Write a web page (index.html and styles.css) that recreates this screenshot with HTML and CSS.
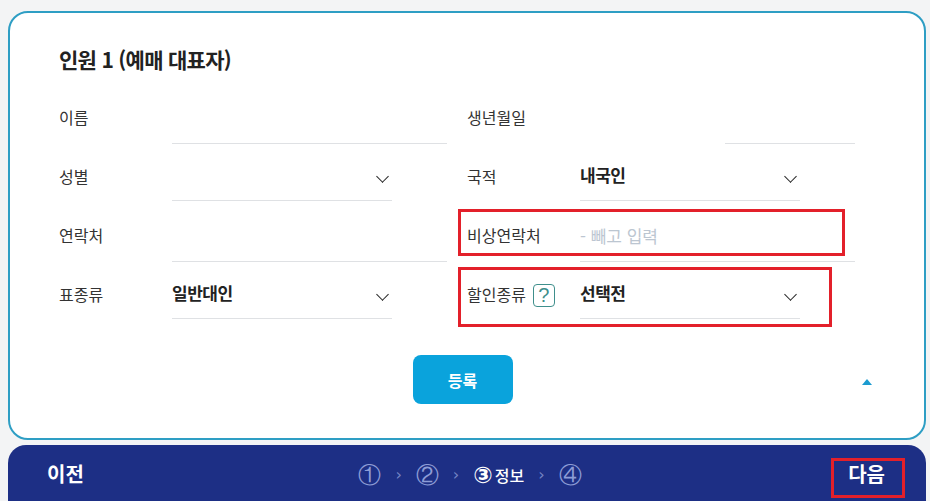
FILE: index.html
```html
<!DOCTYPE html>
<html lang="ko">
<head>
<meta charset="utf-8">
<link rel="stylesheet" href="styles.css">
</head>
<body>
<div class="page">
  <section class="card">
    <h2 class="title">인원 1 (예매 대표자)</h2>
    <div class="form">
      <div class="row">
        <div class="half">
          <span class="label">이름</span>
          <div class="field input"></div>
        </div>
        <div class="half">
          <span class="label">생년월일</span>
          <div class="field input short"></div>
        </div>
      </div>
      <div class="row">
        <div class="half">
          <span class="label">성별</span>
          <div class="field select"><span class="value"></span><span class="chev"></span></div>
        </div>
        <div class="half">
          <span class="label">국적</span>
          <div class="field select"><span class="value">내국인</span><span class="chev"></span></div>
        </div>
      </div>
      <div class="row">
        <div class="half">
          <span class="label">연락처</span>
          <div class="field input"></div>
        </div>
        <div class="half marked">
          <span class="label">비상연락처</span>
          <div class="field input"><span class="placeholder">- 빼고 입력</span></div>
          <span class="redbox box-a"></span>
        </div>
      </div>
      <div class="row">
        <div class="half">
          <span class="label">표종류</span>
          <div class="field select"><span class="value">일반대인</span><span class="chev"></span></div>
        </div>
        <div class="half marked">
          <span class="label">할인종류 <span class="help">?</span></span>
          <div class="field select"><span class="value">선택전</span><span class="chev"></span></div>
          <span class="redbox box-b"></span>
        </div>
      </div>
    </div>
    <div class="actions">
      <span></span>
      <button class="submit" type="button">등록</button>
      <span class="collapse"></span>
    </div>
  </section>
  <nav class="bar">
    <span class="nav-btn prev">이전</span>
    <div class="steps">
      <span class="step">①</span><span class="sep">›</span>
      <span class="step">②</span><span class="sep">›</span>
      <span class="step current"><span class="num">③</span>정보</span><span class="sep">›</span>
      <span class="step">④</span>
    </div>
    <span class="nav-btn next">다음<span class="redbox box-c"></span></span>
  </nav>
</div>
</body>
</html>
```
FILE: styles.css
```css
* { box-sizing: border-box; }
html, body { margin: 0; padding: 0; }
body {
  background: #f3f4f5;
  font-family: "Noto Sans CJK KR", "Noto Sans", sans-serif;
  color: #222;
  overflow: hidden;
}
.page {
  padding: 11px 4px 0 8px;
}
.card {
  background: #fff;
  border: 2px solid #2e9ec4;
  border-radius: 20px;
  padding: 32px 0 34px;
}
.title {
  margin: 0 0 21px 49px;
  font-size: 21px;
  line-height: 28px;
  font-weight: 700;
  letter-spacing: -0.7px;
  color: #222;
}
.form {
  padding: 0 70px 0 49px;
  display: flex;
  flex-direction: column;
  gap: 9px;
}
.row {
  display: grid;
  grid-template-columns: 388px 388px;
  column-gap: 20px;
  height: 50px;
}
.half {
  display: flex;
  align-items: stretch;
  position: relative;
}
.label {
  width: 113px;
  flex: none;
  display: flex;
  align-items: center;
  padding-bottom: 4px;
  font-size: 16px;
  color: #333;
  letter-spacing: 0;
}
.field {
  border-bottom: 1px solid #dfe1e4;
  display: flex;
  align-items: center;
}
.input { width: 275px; }
.input.short { width: 130px; margin-left: 145px; }
.select {
  width: 220px;
  height: 48px;
  justify-content: space-between;
  padding-right: 5px;
}
.value {
  font-size: 17px;
  font-weight: 700;
  color: #222;
  letter-spacing: -0.5px;
  margin-top: -4px;
}
.chev {
  width: 9px;
  height: 9px;
  border-right: 1.3px solid #222;
  border-bottom: 1.3px solid #222;
  transform: rotate(45deg);
  margin-top: -1px;
}
.placeholder {
  font-size: 17px;
  color: #bcc6d1;
  margin-top: -3px;
}
.help {
  display: inline-flex;
  align-items: center;
  justify-content: center;
  width: 22px;
  height: 23px;
  margin-left: 7px;
  margin-top: 2px;
  border: 1.5px solid #3f8f8c;
  border-radius: 4px;
  color: #3f8f8c;
  font-size: 20px;
  line-height: 1;
  font-weight: 400;
  font-family: "Liberation Sans", sans-serif;
}
.redbox {
  position: absolute;
  border: 3px solid #e3202a;
  pointer-events: none;
}
.box-a { left: -9px; top: -3px; width: 387px; height: 47px; }
.box-b { left: -9px; top: -4px; width: 374px; height: 60px; }
.box-c { left: -17px; top: -2px; width: 74px; height: 40px; }
.actions {
  margin-top: 34px;
  display: grid;
  grid-template-columns: 1fr auto 1fr;
  align-items: center;
  padding-right: 9px;
}
.submit {
  width: 100px;
  height: 49px;
  border: none;
  border-radius: 8px;
  background: #0aa3dc;
  color: #fff;
  font-family: inherit;
  font-size: 16px;
  font-weight: 700;
}
.collapse {
  justify-self: end;
  margin-right: 43px;
  width: 0;
  height: 0;
  border-left: 5px solid transparent;
  border-right: 5px solid transparent;
  border-bottom: 6px solid #1b9bd0;
  margin-top: 4px;
}
.bar {
  margin-top: 5px;
  height: 70px;
  background: #1d2f85;
  border-radius: 18px 18px 0 0;
  display: grid;
  grid-template-columns: 1fr auto 1fr;
  align-items: start;
  padding: 15px 41px 0 39px;
  color: #fff;
}
.nav-btn {
  font-size: 20px;
  font-weight: 700;
  line-height: 28px;
  position: relative;
}
.prev { justify-self: start; }
.next { justify-self: end; }
.steps {
  display: flex;
  align-items: center;
  gap: 14px;
  margin-left: 8px;
  line-height: 30px;
  color: #8d9cd6;
}
.step {
  font-size: 23px;
  font-family: "DejaVu Sans", sans-serif;
  font-weight: 200;
  color: #8d9cd6;
}
.step.current {
  color: #fff;
  font-family: "Noto Sans CJK KR", sans-serif;
  font-size: 16px;
  font-weight: 500;
  display: flex;
  align-items: center;
}
.step.current .num {
  font-family: "DejaVu Sans", sans-serif;
  font-size: 23px;
  font-weight: 700;
  margin-right: 2px;
}
.sep {
  font-size: 16px;
  color: #7484c4;
  font-family: "DejaVu Sans", sans-serif;
}
```
